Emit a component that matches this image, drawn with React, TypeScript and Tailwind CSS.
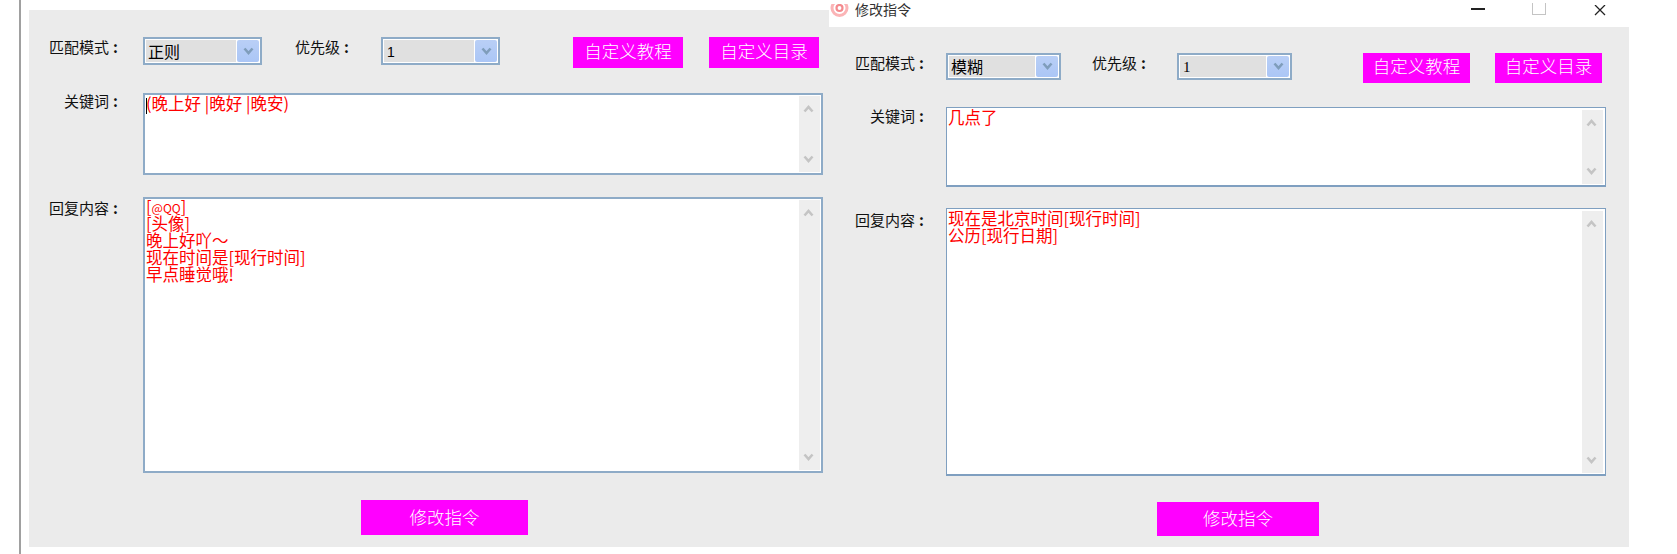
import type { ReactNode } from 'react';

const CJK = "font-['Noto_Sans_CJK_SC',sans-serif]";

function Chevron({ up, className }: { up?: boolean; className: string }) {
  return (
    <svg viewBox="0 0 10 9" className={className}>
      <path
        d={up ? 'M1 7.5 L5 3 L9 7.5' : 'M1 1.5 L5 6 L9 1.5'}
        fill="none"
        stroke="currentColor"
        strokeWidth="2.6"
      />
    </svg>
  );
}

function Label({ text, className }: { text: string; className: string }) {
  return (
    <div className={`shrink-0 text-[15px] leading-[18px] text-[#111111] ${CJK} ${className}`}>
      {text}
      <span className="ml-[4px] font-bold">:</span>
    </div>
  );
}

function Combo({
  value,
  className,
  textClass,
}: {
  value: string;
  className: string;
  textClass: string;
}) {
  return (
    <div className={`flex shrink-0 gap-px border-2 border-[#8eabc7] bg-white p-px ${className}`}>
      <div className={`flex flex-1 items-center bg-[#e0e0e0] text-black ${textClass}`}>{value}</div>
      <div className="flex w-[22px] items-center justify-center rounded-[2px] bg-gradient-to-b from-[#b9cff6] to-[#abc6f6]">
        <Chevron className="h-[9px] w-[11px] text-[#7f9dbb]" />
      </div>
    </div>
  );
}

function PinkButton({ children, className }: { children: ReactNode; className: string }) {
  return (
    <button
      className={`flex shrink-0 items-center justify-center bg-[#ff00ff] text-[17.5px] font-light text-white ${CJK} ${className}`}
    >
      {children}
    </button>
  );
}

function TextBox({
  lines,
  className,
  textClass = '-mt-px',
}: {
  lines: ReactNode[];
  className: string;
  textClass?: string;
}) {
  return (
    <div className={`flex shrink-0 bg-white ${className}`}>
      <div className={`flex-1 text-[16.5px] leading-[17px] text-[#ff0000] ${CJK} ${textClass}`}>
        {lines.map((line, i) => (
          <div key={i} className="h-[17px] whitespace-pre">
            {line}
          </div>
        ))}
      </div>
      <div className="flex w-[21px] flex-col items-center justify-between bg-[#eeeeee] py-[8px] pr-[2px]">
        <Chevron up className="h-[9px] w-[11px] text-[#c4c4c4]" />
        <Chevron className="h-[9px] w-[11px] text-[#c4c4c4]" />
      </div>
    </div>
  );
}

function LeftPanel() {
  return (
    <div className="ml-[8px] mt-[10px] flex h-[537px] w-[800px] shrink-0 flex-col bg-[#ebebeb] pt-[27px]">
      <div className="flex h-[31px] items-start">
        <Label text="匹配模式" className="w-[114px] pt-[1px] pr-[25px] text-right" />
        <Combo value="正则" className="h-[28px] w-[119px]" textClass={`pl-[2px] text-[16px] ${CJK}`} />
        <Label text="优先级" className="ml-[33px] w-[86px] pt-[1px]" />
        <Combo
          value="1"
          className="h-[28px] w-[119px]"
          textClass="pl-[3px] pt-[3px] text-[14px] font-['Liberation_Sans',sans-serif]"
        />
        <PinkButton className="ml-[73px] h-[31px] w-[110px] pb-[3px]">自定义教程</PinkButton>
        <PinkButton className="ml-[26px] h-[31px] w-[110px] pb-[3px]">自定义目录</PinkButton>
      </div>

      <div className="mt-[25px] flex items-start">
        <Label text="关键词" className="-mt-px w-[114px] pr-[25px] text-right" />
        <TextBox
          lines={[
            <>
              <span className="-mr-px inline-block h-[16px] w-0 border-l border-black align-middle" />
              (晚上好 |晚好 |晚安)
            </>,
          ]}
          className="h-[82px] w-[680px] border-2 border-[#8eabc7] p-px"
        />
      </div>

      <div className="mt-[22px] flex items-start">
        <Label text="回复内容" className="w-[114px] pt-[2px] pr-[25px] text-right" />
        <TextBox
          lines={[
            <>
              [<span className="text-[12px]">@QQ</span>]
            </>,
            '[头像]',
            '晚上好吖～',
            '现在时间是[现行时间]',
            '早点睡觉哦!',
          ]}
          textClass="-mt-[2px]"
          className="h-[276px] w-[680px] border-2 border-[#8eabc7] p-px"
        />
      </div>

      <PinkButton className="ml-[332px] mt-[27px] h-[35px] w-[167px] pb-[1px]">修改指令</PinkButton>
    </div>
  );
}

function TitleBar() {
  return (
    <div className="flex h-[27px] shrink-0 items-start overflow-hidden bg-white">
      <svg viewBox="0 0 20 16" className="ml-px mt-[4px] h-[16px] w-[20px]">
        <circle cx="9.5" cy="4" r="7.5" fill="none" stroke="#fbb4b6" strokeWidth="3" />
        <circle cx="9.5" cy="4" r="3" fill="none" stroke="#f48a8e" strokeWidth="2.2" />
      </svg>
      <div className={`ml-[5px] -mt-[1px] text-[14px] leading-[20px] text-[#333333] ${CJK}`}>修改指令</div>
      <div className="ml-[560px] mt-[8px] h-[1.5px] w-[14px] bg-[#222222]" />
      <div className="ml-[47px] mt-[3px] h-[12px] w-[14px] border-x border-b border-[#c4c4c4]" />
      <svg viewBox="0 0 14 11" className="ml-[47px] mt-[5px] h-[11px] w-[14px]">
        <path d="M2 0 L12 10 M12 0 L2 10" stroke="#222222" strokeWidth="1.3" fill="none" />
      </svg>
    </div>
  );
}

function RightPanel() {
  return (
    <div className="flex h-[547px] w-[800px] shrink-0 flex-col">
      <TitleBar />
      <div className="flex flex-1 flex-col bg-[#ebebeb] pt-[26px]">
        <div className="flex h-[30px] items-start">
          <Label text="匹配模式" className="w-[117px] pt-[1px] pr-[22px] text-right" />
          <Combo value="模糊" className="h-[27px] w-[115px]" textClass={`pl-[2px] pb-[2px] text-[16px] ${CJK}`} />
          <Label text="优先级" className="ml-[31px] w-[85px] pt-[1px]" />
          <Combo
            value="1"
            className="h-[27px] w-[115px]"
            textClass="pl-[3px] pt-[2px] text-[15px] font-['Liberation_Serif',serif]"
          />
          <PinkButton className="ml-[71px] h-[30px] w-[107px] pb-[3px]">自定义教程</PinkButton>
          <PinkButton className="ml-[25px] h-[30px] w-[107px] pb-[3px]">自定义目录</PinkButton>
        </div>

        <div className="mt-[24px] flex items-start">
          <Label text="关键词" className="w-[117px] pr-[22px] text-right" />
          <TextBox
            lines={['几点了']}
            className="h-[80px] w-[660px] border border-b-2 border-[#7f9fc0] py-[2px] pr-[2px] pl-px pb-px"
          />
        </div>

        <div className="mt-[21px] flex items-start">
          <Label text="回复内容" className="w-[117px] pt-[3px] pr-[22px] text-right" />
          <TextBox
            lines={['现在是北京时间[现行时间]', '公历[现行日期]']}
            className="h-[268px] w-[660px] border border-b-2 border-[#7f9fc0] py-[2px] pr-[2px] pl-px pb-px"
          />
        </div>

        <PinkButton className="ml-[328px] mt-[26px] h-[34px] w-[162px] pb-[1px]">修改指令</PinkButton>
      </div>
    </div>
  );
}

export default function App() {
  return (
    <div className="flex h-[554px] w-[1677px] overflow-hidden bg-white">
      <div className="ml-[19px] w-[2px] shrink-0 bg-[#a0a0a0]" />
      <LeftPanel />
      <RightPanel />
    </div>
  );
}
